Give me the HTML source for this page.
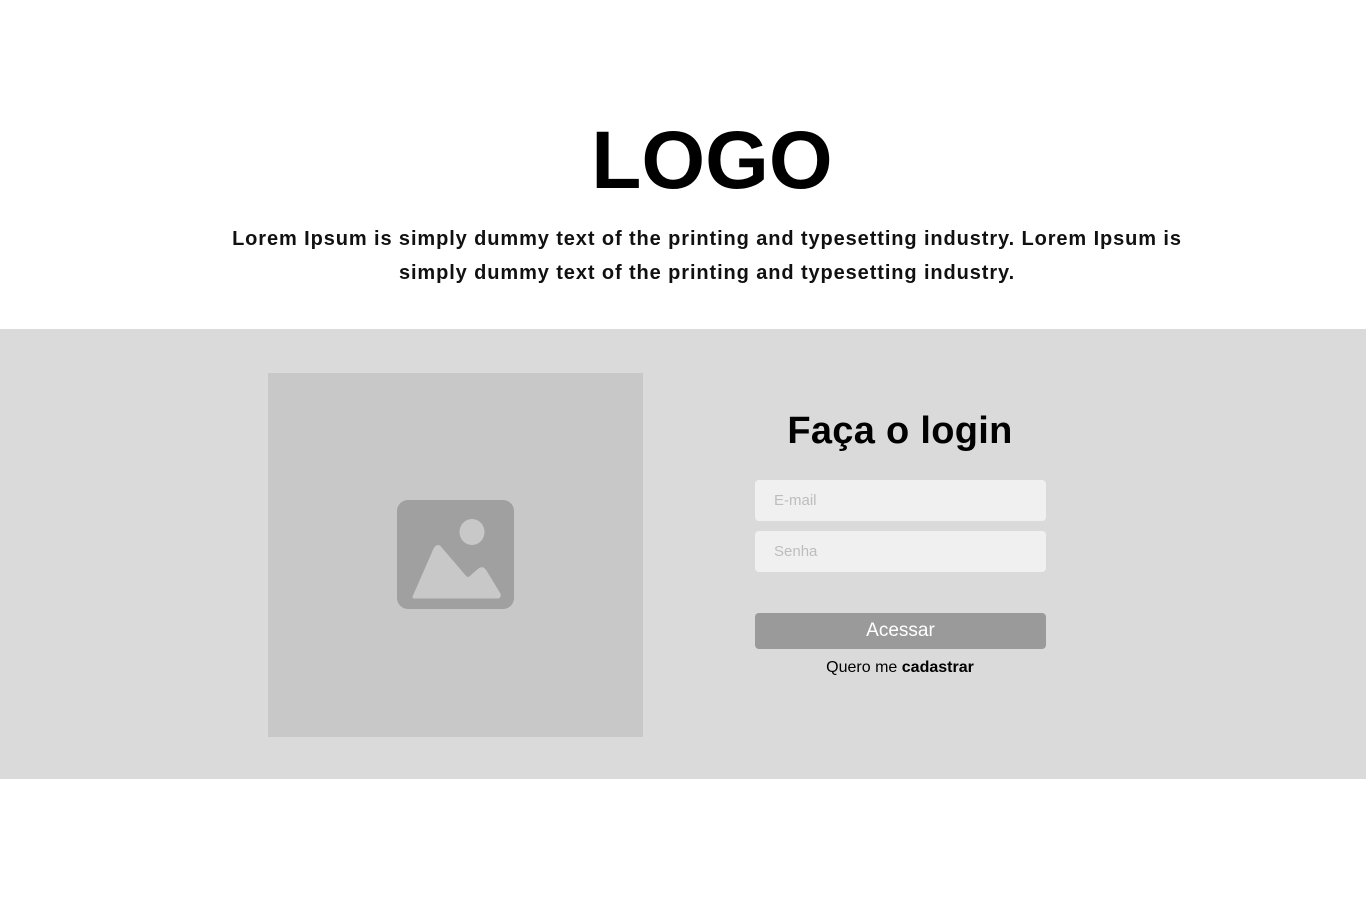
<!DOCTYPE html>
<html><head><meta charset="utf-8"><style>
*{margin:0;padding:0;box-sizing:border-box}
body{width:1366px;height:913px;background:#fff;font-family:"Liberation Sans",sans-serif;position:relative;overflow:hidden}
.logo{position:absolute;top:116px;left:29px;width:1366px;text-align:center;font-weight:bold;font-size:82px;line-height:90px;letter-spacing:0px;color:#000}
.p{position:absolute;top:222px;left:203px;width:1008px;text-align:center;font-weight:bold;font-size:20px;line-height:34px;letter-spacing:0.9px;color:#111}
.band{position:absolute;top:329px;left:0;width:1366px;height:450px;background:#dadada}
.img{position:absolute;left:268px;top:373px;width:375px;height:364px;background:#c8c8c8}
h2{position:absolute;left:700px;width:400px;top:408px;text-align:center;font-size:38px;line-height:46px;font-weight:bold;color:#000;letter-spacing:0.3px}
.in{position:absolute;left:755px;width:291px;height:41px;background:#f0f0f0;border-radius:4px;font-size:15px;color:#bdbdbd;padding-left:19px;line-height:42px}
.btn{position:absolute;left:755px;top:613px;width:291px;height:36px;background:#9a9a9a;border-radius:4px;color:#fff;font-size:19px;text-align:center;line-height:36px}
.reg{position:absolute;left:700px;width:400px;top:658px;text-align:center;font-size:16px;line-height:20px;color:#000}
</style></head><body>
<div class="logo">LOGO</div>
<div class="p">Lorem Ipsum is simply dummy text of the printing and typesetting industry. Lorem Ipsum is simply dummy text of the printing and typesetting industry.</div>
<div class="band"></div>
<div class="img"></div>
<svg style="position:absolute;left:0;top:0" width="1366" height="913">
<rect x="397" y="500" width="117" height="109" rx="11" fill="#a0a0a0"/>
<ellipse cx="472" cy="532" rx="12.5" ry="13" fill="#c8c8c8"/>
<path d="M414 597 L435 549 Q438 544 441 549 L465 577 Q468 580 471 577 L479 570 Q482 567 485 571 L499 594 Q500 597 497 597 Z" fill="#c8c8c8" stroke="#c8c8c8" stroke-width="3" stroke-linejoin="round"/>
</svg>
<h2>Faça o login</h2>
<div class="in" style="top:480px">E-mail</div>
<div class="in" style="top:531px">Senha</div>
<div class="btn">Acessar</div>
<div class="reg">Quero me <b>cadastrar</b></div>
</body></html>
